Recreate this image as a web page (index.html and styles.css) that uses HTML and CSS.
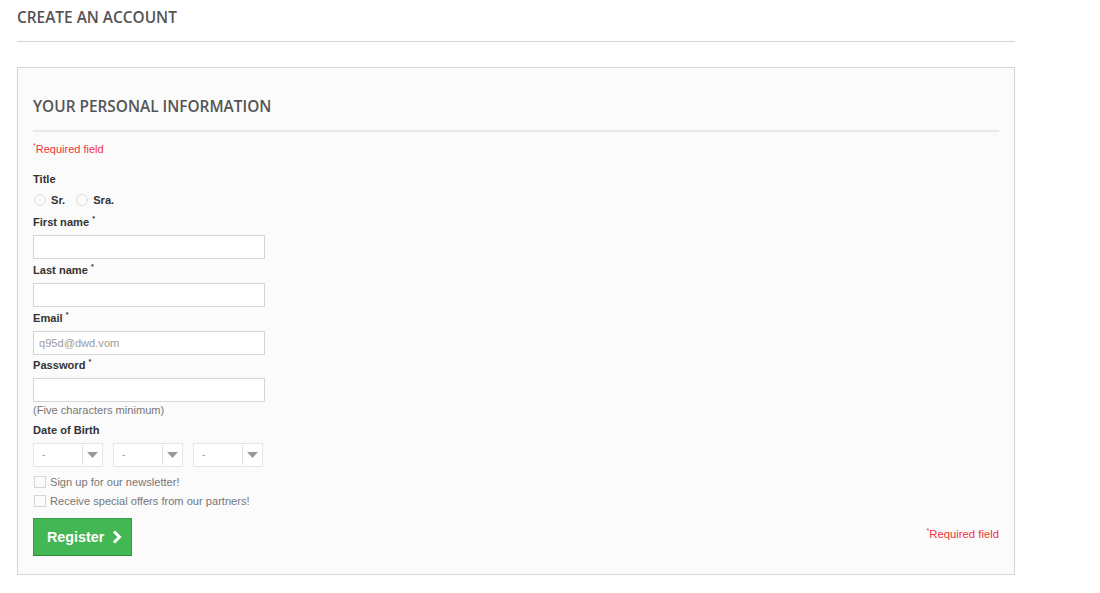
FILE: index.html
```html
<!DOCTYPE html>
<html>
<head>
<meta charset="utf-8">
<link rel="stylesheet" href="styles.css">
</head>
<body>
<div class="page">
  <h1 class="page-heading">Create an account</h1>
  <div class="box">
    <h3 class="page-subheading">Your personal information</h3>
    <p class="required"><sup>*</sup>Required field</p>
    <div class="field">
      <label class="lbl">Title</label>
      <div class="radios">
        <span class="radio"></span><span class="rlabel">Sr.</span>
        <span class="radio"></span><span class="rlabel">Sra.</span>
      </div>
    </div>
    <div class="field">
      <label class="lbl">First name <sup>*</sup></label>
      <div class="input"></div>
    </div>
    <div class="field">
      <label class="lbl">Last name <sup>*</sup></label>
      <div class="input"></div>
    </div>
    <div class="field tight">
      <label class="lbl">Email <sup>*</sup></label>
      <div class="input"><span class="val">q95d@dwd.vom</span></div>
    </div>
    <div class="field">
      <label class="lbl">Password <sup>*</sup></label>
      <div class="input"></div>
      <span class="hint">(Five characters minimum)</span>
    </div>
    <div class="field">
      <label class="lbl">Date of Birth</label>
      <div class="selects">
        <div class="select"><span class="sv">-</span><span class="sbtn"><svg width="11" height="6" viewBox="0 0 11 6"><path d="M0 0h11L5.5 6z" fill="#9a9a9a"/></svg></span></div>
        <div class="select"><span class="sv">-</span><span class="sbtn"><svg width="11" height="6" viewBox="0 0 11 6"><path d="M0 0h11L5.5 6z" fill="#9a9a9a"/></svg></span></div>
        <div class="select"><span class="sv">-</span><span class="sbtn"><svg width="11" height="6" viewBox="0 0 11 6"><path d="M0 0h11L5.5 6z" fill="#9a9a9a"/></svg></span></div>
      </div>
    </div>
    <div class="check"><span class="cb"></span><span>Sign up for our newsletter!</span></div>
    <div class="check"><span class="cb"></span><span>Receive special offers from our partners!</span></div>
    <div class="submit">
      <button class="btn">Register <svg width="10" height="14" viewBox="0 0 10 14"><path d="M2 1.5l5.5 5.5L2 12.5" fill="none" stroke="#fff" stroke-width="3"/></svg></button>
      <span class="required right"><sup>*</sup>Required field</span>
    </div>
  </div>
</div>
</body>
</html>
```
FILE: styles.css
```css
* { box-sizing: border-box; }
body {
  margin: 0;
  background: #fff;
  font-family: "Liberation Sans", Arial, sans-serif;
  font-size: 11.1px;
  color: #777;
}
.page {
  width: 998px;
  margin-left: 17px;
}
.page-heading {
  margin: 0 0 25px;
  padding: 6px 0 12px;
  font-family: "Open Sans", sans-serif;
  font-weight: 600;
  font-size: 15.4px;
  line-height: 23px;
  color: #555454;
  text-transform: uppercase;
  border-bottom: 1px solid #d6d4d4;
}
.box {
  background: #fbfbfb;
  border: 1px solid #d6d4d4;
  padding: 26px 15px 17px;
  height: 508px;
}
.page-subheading {
  margin: 0 0 8px;
  padding: 1px 0 11px;
  font-family: "Open Sans", sans-serif;
  font-weight: 600;
  font-size: 15.4px;
  line-height: 24px;
  color: #555454;
  text-transform: uppercase;
  border-bottom: 2px solid #e9e9e9;
}
.required {
  color: #f13340;
  margin: 0 0 12px;
  line-height: 18px;
  font-size: 11px;
}
sup {
  font-size: 7px;
  vertical-align: 5px;
  line-height: 0;
}
.field { margin-bottom: 2px; }
.field.tight { margin-bottom: 1px; }
.lbl {
  display: block;
  font-weight: bold;
  color: #333;
  line-height: 18px;
  margin-bottom: 4px;
}
.field:first-of-type .lbl { margin-bottom: 3px; }
.radios {
  display: flex;
  align-items: center;
  height: 18px;
  margin-bottom: 4px;
  font-weight: bold;
  color: #333;
}
.radio {
  width: 12px;
  height: 12px;
  border-radius: 50%;
  border: 1px solid #dcdcdc;
  background: #fbfbfb;
  margin-left: 1px;
  margin-right: 5px;
}
.rlabel { margin-right: 10px; }
.input {
  width: 232px;
  height: 24px;
  background: #fff;
  border: 1px solid #d6d4d4;
  padding: 0 5px;
  line-height: 22px;
}
.val { color: #9c9b9b; }
.hint {
  display: block;
  line-height: 18px;
  margin-top: -1px;
}
.selects {
  display: flex;
  gap: 10px;
  margin-bottom: 5px;
}
.select {
  width: 70px;
  height: 24px;
  background: #fff;
  border: 1px solid #e5e5e5;
  display: flex;
  align-items: stretch;
  padding: 1px;
}
.sv {
  flex: 1;
  padding-left: 7px;
  line-height: 20px;
  color: #999;
  font-size: 10px;
}
.sbtn {
  width: 19px;
  border-left: 1px solid #e3e3e3;
  display: flex;
  align-items: center;
  justify-content: center;
  background: #fff;
}
.check {
  display: flex;
  align-items: center;
  height: 19px;
}
.cb {
  width: 12px;
  height: 12px;
  border: 1px solid #d6d4d4;
  background: #fbfbfb;
  margin-left: 1px;
  margin-right: 4px;
}
.submit {
  display: flex;
  justify-content: space-between;
  align-items: center;
  margin-top: 8px;
}
.btn {
  width: 99px;
  height: 38px;
  background: #43b754;
  border: 1px solid #399a49;
  border-bottom-color: #2e8a3d;
  color: #fff;
  font-family: "Liberation Sans", Arial, sans-serif;
  font-weight: bold;
  font-size: 14.3px;
  display: flex;
  align-items: center;
  gap: 8px;
  padding: 0 0 0 13px;
}
.required.right { margin: 0 0 6px; font-size: 11.3px; }
```
